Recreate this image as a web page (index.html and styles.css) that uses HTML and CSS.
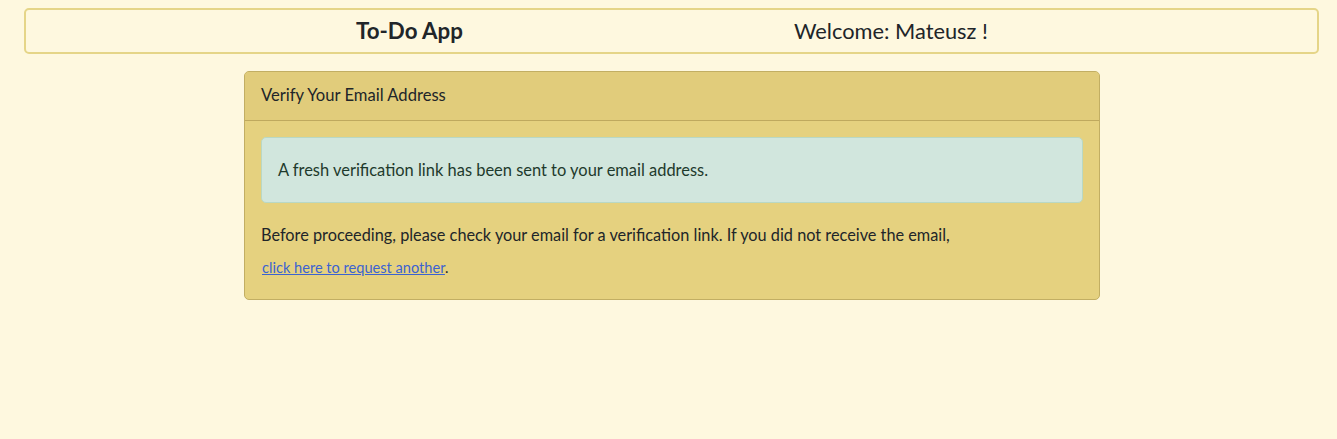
FILE: index.html
```html
<!DOCTYPE html>
<html lang="en">
<head>
<meta charset="utf-8">
<title>To-Do App</title>
<link rel="stylesheet" href="styles.css">
</head>
<body>
<nav class="navbar">
  <span class="brand">To-Do App</span>
  <span class="welcome">Welcome: Mateusz !</span>
</nav>
<main class="main">
  <div class="card">
    <div class="card-header">Verify Your Email Address</div>
    <div class="card-body">
      <div class="alert">A fresh verification link has been sent to your email address.</div>
      <p class="text">Before proceeding, please check your email for a verification link. If you did not receive the email,</p>
      <p class="link-line"><a class="link" href="#">click here to request another</a>.</p>
    </div>
  </div>
</main>
</body>
</html>
```
FILE: styles.css
```css
html, body {
  margin: 0;
  padding: 0;
}
body {
  background: #fef8df;
  font-family: "Lato", "Noto Sans", sans-serif;
  color: #212529;
  padding: 8px 18px 0 24px;
}
.navbar {
  display: flex;
  align-items: center;
  border: 2px solid #e5d588;
  border-radius: 5px;
  padding-left: 330px;
  padding-bottom: 2px;
  box-sizing: border-box;
  height: 46px;
}
.brand {
  font-weight: 700;
  font-size: 22.3px;
  width: 438px;
}
.welcome {
  font-size: 21.8px;
}
.main {
  display: flex;
  padding-top: 17px;
  padding-left: 220px;
}
.card {
  width: 854px;
  border: 1px solid #c2ae63;
  border-radius: 5px;
  background: #e5d17f;
  overflow: hidden;
}
.card-header {
  background: #e1cc7b;
  border-bottom: 1px solid #bfa95e;
  box-sizing: border-box;
  display: flex;
  align-items: center;
  padding: 0 0 3px 16px;
  height: 49px;
  font-size: 16.6px;
}
.card-body {
  padding: 16px 16px 0 16px;
}
.alert {
  background: #d1e6dd;
  border: 1px solid #b9d8c4;
  border-radius: 5px;
  height: 66px;
  box-sizing: border-box;
  display: flex;
  align-items: center;
  padding: 0 0 1px 16px;
  color: #1e3a2c;
  font-size: 16.45px;
}
.text {
  margin: 20px 0 0 0;
  font-size: 16.3px;
  line-height: 24px;
}
.link-line {
  margin: 11px 0 0 1px;
  font-size: 14.6px;
  line-height: 20px;
  padding-bottom: 21px;
}
.link {
  color: #3b63d1;
  text-decoration: underline;
}
```
